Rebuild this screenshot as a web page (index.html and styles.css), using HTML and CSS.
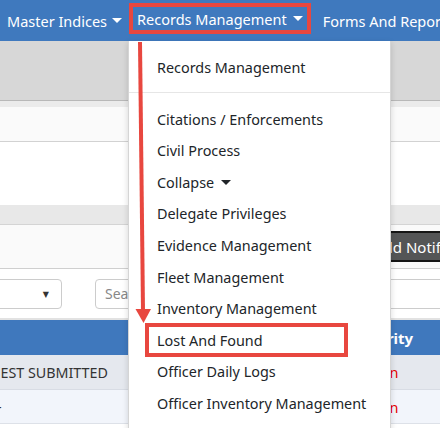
FILE: index.html
```html
<!DOCTYPE html>
<html lang="en">
<head>
<meta charset="utf-8">
<title>Records Management menu</title>
<link rel="stylesheet" href="styles.css">
</head>
<body>
<header class="navbar">
  <a class="nav-link nav-first">Master Indices <span class="caret"></span></a>
  <a class="nav-link nav-highlight">Records Management <span class="caret"></span></a>
  <a class="nav-link">Forms And Reports</a>
</header>

<main class="content">
  <div class="page-head"></div>
  <div class="strip"></div>
  <div class="panel"></div>
  <div class="blank"></div>
  <div class="section-head"></div>
  <div class="toolbar">
    <button class="btn-dark">Add Notification</button>
  </div>
  <div class="filters">
    <div class="select"><span class="select-caret">▼</span></div>
    <div class="search">Search</div>
  </div>
  <div class="table">
    <div class="tr th">
      <div class="c1"></div>
      <div class="c2">Priority</div>
    </div>
    <div class="tr odd">
      <div class="c1">REQUEST SUBMITTED</div>
      <div class="c2 red">Open</div>
    </div>
    <div class="tr even">
      <div class="c1"><span class="dash">-</span></div>
      <div class="c2 red">Open</div>
    </div>
  </div>
</main>

<nav class="dropdown">
  <a class="dd-item">Records Management</a>
  <div class="dd-divider"></div>
  <a class="dd-item">Citations / Enforcements</a>
  <a class="dd-item">Civil Process</a>
  <a class="dd-item">Collapse <span class="caret dark"></span></a>
  <a class="dd-item">Delegate Privileges</a>
  <a class="dd-item">Evidence Management</a>
  <a class="dd-item">Fleet Management</a>
  <a class="dd-item">Inventory Management</a>
  <a class="dd-item dd-highlight">Lost And Found</a>
  <a class="dd-item">Officer Daily Logs</a>
  <a class="dd-item">Officer Inventory Management</a>
</nav>

<svg class="arrow" width="440" height="428" viewBox="0 0 440 428" aria-hidden="true">
  <line x1="140" y1="42" x2="143" y2="311" stroke="#e8473f" stroke-width="4"/>
  <polygon points="135.5,309 151,309 143.5,323" fill="#e8473f"/>
</svg>
</body>
</html>
```

FILE: styles.css
```css
html, body {
  margin: 0;
  padding: 0;
  width: 440px;
  height: 428px;
  overflow: hidden;
  background: #ffffff;
  font-family: "Noto Sans", "Open Sans", "DejaVu Sans", sans-serif;
}

.navbar {
  height: 41px;
  background: #3f79be;
  display: flex;
  align-items: center;
  padding-left: 7px;
  white-space: nowrap;
  box-sizing: border-box;
}

.nav-link {
  color: #ffffff;
  font-size: 14.5px;
  display: flex;
  align-items: center;
  gap: 6px;
  margin-right: 11px;
}

.nav-first {
  gap: 5px;
  margin-right: 7px;
}

.nav-highlight {
  align-self: flex-start;
  margin-top: 3px;
  border: 4px solid #e8473f;
  height: 31px;
  box-sizing: border-box;
  padding: 0 4px 0 4px;
  margin-right: 12px;
}

.caret {
  display: inline-block;
  width: 0;
  height: 0;
  border-left: 5px solid transparent;
  border-right: 5px solid transparent;
  border-top: 5px solid #ffffff;
}

.caret.dark {
  border-top-color: #212529;
  margin-left: 3px;
  vertical-align: 3px;
}

/* background page */
.page-head {
  height: 59px;
  background: #d7d7d7;
  border-bottom: 1px solid #b8b8b8;
}

.strip {
  height: 6px;
  background: #ebebeb;
}

.panel {
  height: 34px;
  background: #fafafa;
  border-bottom: 1px solid #d2d2d2;
}

.blank {
  height: 63px;
  background: #ffffff;
}

.section-head {
  height: 19px;
  background: #e8e8e8;
  border-bottom: 1px solid #d4d4d4;
}

.toolbar {
  height: 43px;
  background: #fafafa;
  border-bottom: 1px solid #cfcfcf;
  display: flex;
  align-items: center;
  padding-left: 362px;
}

.btn-dark {
  background: #545556;
  border: 2px solid #151515;
  color: #ffffff;
  font-family: inherit;
  font-size: 15px;
  height: 31px;
  padding: 0 10px;
  white-space: nowrap;
}

.filters {
  height: 49px;
  display: flex;
  align-items: center;
  gap: 33px;
  margin-left: -40px;
}

.select {
  width: 102px;
  height: 30px;
  border: 1px solid #cccccc;
  border-radius: 4px;
  box-sizing: border-box;
  display: flex;
  align-items: center;
  justify-content: flex-end;
  padding-right: 12px;
  flex: none;
}

.select-caret {
  font-size: 8px;
  color: #333333;
}

.search {
  flex: 1;
  height: 30px;
  border: 1px solid #cccccc;
  border-radius: 4px;
  box-sizing: border-box;
  color: #888888;
  font-size: 14px;
  line-height: 28px;
  padding-left: 9px;
  margin-right: -20px;
}

.table {
  border-top: 2px solid #e2e2e2;
  margin-left: -38px;
}

.tr {
  display: flex;
  align-items: center;
  white-space: nowrap;
}

.th {
  height: 35px;
  background: #3f78bd;
  color: #ffffff;
  font-weight: bold;
  font-size: 15px;
}

.odd {
  height: 35px;
  background: #e5e8ee;
  border-bottom: 1px solid #d8dce4;
  box-sizing: border-box;
}

.even {
  height: 33px;
  background: #f2f5fb;
  border-bottom: 1px solid #dde1e8;
}

.c1 {
  width: 395px;
  flex: none;
  font-size: 14.3px;
  color: #333333;
}

.dash {
  padding-left: 35px;
}

.c2 {
  font-size: 14.5px;
}

.th .c2 {
  font-size: 15px;
}

.red {
  color: #e60000;
  padding-left: 4px;
}

/* dropdown */
.dropdown {
  position: absolute;
  left: 128px;
  top: 41px;
  width: 263px;
  height: 400px;
  box-sizing: border-box;
  background: #ffffff;
  border: 1px solid #d5d5d5;
  border-top: none;
  box-shadow: 0 2px 6px rgba(0, 0, 0, 0.15);
  padding-top: 11px;
}

.dd-item {
  display: block;
  position: relative;
  padding: 0 28px;
  height: 31.6px;
  line-height: 31.6px;
  font-size: 14.4px;
  color: #212529;
  white-space: nowrap;
}

.dd-divider {
  height: 1px;
  background: #e6e6e6;
  margin: 8px 0 11px;
}

.dd-highlight::after {
  content: "";
  position: absolute;
  left: 16px;
  top: -2px;
  width: 203px;
  height: 34px;
  box-sizing: border-box;
  border: 4px solid #e8473f;
}

.arrow {
  position: absolute;
  left: 0;
  top: 0;
  pointer-events: none;
}
```
